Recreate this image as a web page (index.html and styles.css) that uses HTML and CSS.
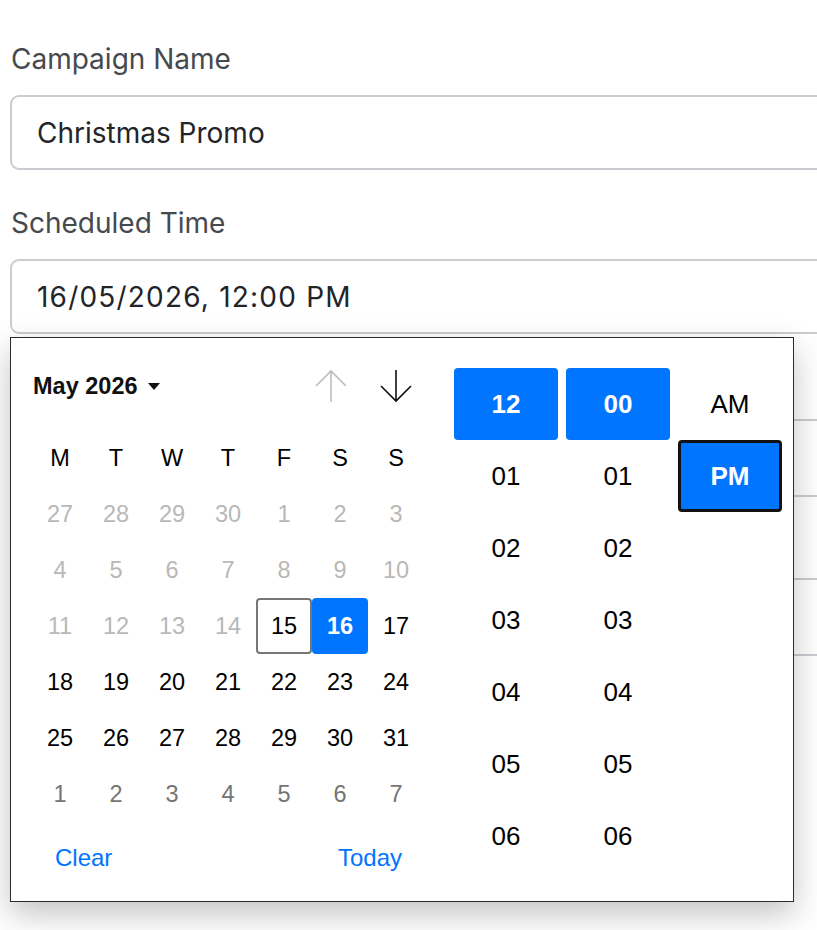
FILE: index.html
```html
<!DOCTYPE html>
<html lang="en">
<head>
<meta charset="utf-8">
<title>Campaign</title>
<link rel="stylesheet" href="styles.css">
</head>
<body>
<div class="page">
  <div class="field field-first">
    <label class="label">Campaign Name</label>
    <div class="input">Christmas Promo</div>
  </div>
  <div class="field field-dt">
    <label class="label">Scheduled Time</label>
    <div class="input input-date">16/05/2026, 12:00 PM</div>
    <div class="picker">
      <div class="cal">
        <div class="cal-head">
          <div class="month">May 2026
            <svg class="caret" width="12" height="7" viewBox="0 0 12 7"><polygon points="0,0 12,0 6,7" fill="#111"/></svg>
          </div>
          <div class="navs">
            <button class="nav nav-off"><svg width="32" height="34" viewBox="0 0 32 34"><path d="M16 33V2M1 17L16 2L31 17" fill="none" stroke="#bdbdbd" stroke-width="1.6"/></svg></button>
            <button class="nav"><svg width="32" height="34" viewBox="0 0 32 34"><path d="M16 1V32M1 17L16 32L31 17" fill="none" stroke="#111" stroke-width="1.6"/></svg></button>
          </div>
        </div>
        <div class="grid">
          <div class="dow">M</div><div class="dow">T</div><div class="dow">W</div><div class="dow">T</div><div class="dow">F</div><div class="dow">S</div><div class="dow">S</div>
          <div class="d prev">27</div><div class="d prev">28</div><div class="d prev">29</div><div class="d prev">30</div><div class="d prev">1</div><div class="d prev">2</div><div class="d prev">3</div>
          <div class="d prev">4</div><div class="d prev">5</div><div class="d prev">6</div><div class="d prev">7</div><div class="d prev">8</div><div class="d prev">9</div><div class="d prev">10</div>
          <div class="d prev">11</div><div class="d prev">12</div><div class="d prev">13</div><div class="d prev">14</div><div class="d today">15</div><div class="d sel">16</div><div class="d">17</div>
          <div class="d">18</div><div class="d">19</div><div class="d">20</div><div class="d">21</div><div class="d">22</div><div class="d">23</div><div class="d">24</div>
          <div class="d">25</div><div class="d">26</div><div class="d">27</div><div class="d">28</div><div class="d">29</div><div class="d">30</div><div class="d">31</div>
          <div class="d next">1</div><div class="d next">2</div><div class="d next">3</div><div class="d next">4</div><div class="d next">5</div><div class="d next">6</div><div class="d next">7</div>
        </div>
        <div class="cal-foot">
          <span class="link">Clear</span>
          <span class="link">Today</span>
        </div>
      </div>
      <div class="time">
        <div class="tcol">
          <div class="t t-sel">12</div><div class="t">01</div><div class="t">02</div><div class="t">03</div><div class="t">04</div><div class="t">05</div><div class="t">06</div>
        </div>
        <div class="tcol">
          <div class="t t-sel">00</div><div class="t">01</div><div class="t">02</div><div class="t">03</div><div class="t">04</div><div class="t">05</div><div class="t">06</div>
        </div>
        <div class="tcol">
          <div class="t">AM</div><div class="t t-sel t-focus">PM</div>
        </div>
      </div>
    </div>
  </div>
  <div class="field field-hidden">
    <div class="label-space"></div>
    <div class="input input-tall"></div>
  </div>
  <div class="field">
    <div class="label-space"></div>
    <div class="input input-tall"></div>
  </div>
</div>
</body>
</html>
```
FILE: styles.css
```css
html {
  overflow: hidden;
}
html, body {
  margin: 0;
  padding: 0;
  background: #fff;
}
.page {
  box-sizing: border-box;
  height: 930px;
  overflow: hidden;
  padding: 41px 0 0 10px;
  font-family: "Inter", "Liberation Sans", sans-serif;
}
.field {
  position: relative;
  display: flex;
  flex-direction: column;
  margin-right: -60px;
  margin-bottom: 31px;
}
.field-first {
  margin-bottom: 35px;
}
.field-hidden {
  margin-bottom: 27px;
}
.label {
  display: block;
  height: 36px;
  line-height: 36px;
  font-size: 28px;
  color: #46494e;
  padding-left: 1px;
  margin-bottom: 18px;
}
.label-space {
  height: 54px;
}
.input {
  box-sizing: border-box;
  height: 75px;
  border: 2px solid #c9cdd1;
  border-radius: 9px;
  padding-left: 25px;
  display: flex;
  align-items: center;
  font-size: 28px;
  color: #232427;
  background: #fff;
}
.input-date {
  letter-spacing: 1.2px;
}
.input-tall {
  height: 78px;
}
.picker {
  position: absolute;
  top: calc(100% + 3px);
  left: 0;
  z-index: 5;
  display: flex;
  gap: 30px;
  width: 784px;
  box-sizing: border-box;
  padding: 30px 11px 29px 21px;
  background: #fff;
  border: 1px solid #2a2a2a;
  box-shadow: 0 12px 30px rgba(0, 0, 0, 0.24);
  font-family: "Liberation Sans", Arial, sans-serif;
  color: #000;
}
.cal {
  width: 392px;
  display: flex;
  flex-direction: column;
}
.cal-head {
  height: 36px;
  margin-bottom: 26px;
  display: flex;
  align-items: center;
  justify-content: space-between;
}
.month {
  display: flex;
  align-items: center;
  gap: 10px;
  padding-left: 1px;
  font-size: 23.5px;
  font-weight: bold;
  color: #111;
}
.caret {
  display: block;
}
.navs {
  display: flex;
  gap: 25px;
  padding-right: 8px;
}
.nav {
  width: 40px;
  height: 36px;
  border: 0;
  padding: 0;
  background: none;
  display: flex;
  align-items: center;
  justify-content: center;
}
.nav svg {
  display: block;
}
.grid {
  display: grid;
  grid-template-columns: repeat(7, 56px);
  grid-auto-rows: 56px;
}
.dow, .d {
  display: flex;
  align-items: center;
  justify-content: center;
  font-size: 23.5px;
  box-sizing: border-box;
  padding-top: 1px;
}
.d.prev { color: #b8b8b8; }
.d.next { color: #747474; }
.d.today {
  border: 2px solid #767676;
  border-radius: 4px;
}
.d.sel {
  background: #0075ff;
  color: #fff;
  font-weight: bold;
  border-radius: 4px;
}
.cal-foot {
  margin-top: 22px;
  height: 28px;
  display: flex;
  align-items: center;
  justify-content: space-between;
  padding: 0 22px 0 23px;
}
.link {
  color: #0075ff;
  font-size: 24px;
}
.time {
  display: flex;
  gap: 8px;
}
.tcol {
  width: 104px;
  display: flex;
  flex-direction: column;
}
.t {
  height: 72px;
  box-sizing: border-box;
  display: flex;
  align-items: center;
  justify-content: center;
  font-size: 26px;
  color: #000;
}
.t-sel {
  background: #0075ff;
  color: #fff;
  font-weight: bold;
  border-radius: 4px;
}
.t-focus {
  border: 3px solid #111;
}
```
